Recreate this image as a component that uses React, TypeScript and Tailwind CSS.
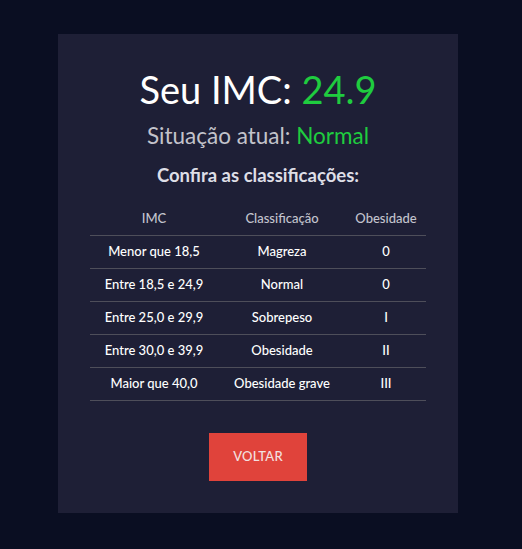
import React from "react";

const rows = [
  ["Menor que 18,5", "Magreza", "0"],
  ["Entre 18,5 e 24,9", "Normal", "0"],
  ["Entre 25,0 e 29,9", "Sobrepeso", "I"],
  ["Entre 30,0 e 39,9", "Obesidade", "II"],
  ["Maior que 40,0", "Obesidade grave", "III"],
];

export default function App() {
  return (
    <div
      className="min-h-screen w-full bg-[#0a0e22] pt-[34px] pb-[36px]"
      style={{ fontFamily: "Lato, 'Open Sans', sans-serif" }}
    >
      <div className="ml-[58px] w-[400px] h-[479px] bg-[#1e1f36] px-8 pt-[32px] flex flex-col items-center">
        <h1 className="text-[38px] leading-[46px] font-normal text-white">
          Seu IMC: <span className="text-[#1fcc3f]">24.9</span>
        </h1>
        <p className="mt-[11px] text-[22.5px] leading-[26px] text-[#c3c3cb]">
          Situação atual: <span className="text-[#1fcc3f]">Normal</span>
        </p>
        <h2 className="mt-[15px] text-[18.5px] leading-[22px] font-bold text-[#dedee6]">
          Confira as classificações:
        </h2>
        <div className="mt-[16px] w-full text-[13px] font-medium">
          <div className="grid grid-cols-[128px_128px_80px] h-[34px] items-center border-b border-[#4e4e5a] text-[#c3c4ce]">
            <div className="text-center">IMC</div>
            <div className="text-center">Classificação</div>
            <div className="text-center">Obesidade</div>
          </div>
          {rows.map((r) => (
            <div
              key={r[0]}
              className="grid grid-cols-[128px_128px_80px] h-[33px] items-center border-b border-[#4e4e5a] text-white"
            >
              <div className="text-center">{r[0]}</div>
              <div className="text-center">{r[1]}</div>
              <div className="text-center">{r[2]}</div>
            </div>
          ))}
        </div>
        <button className="mt-[32px] w-[98px] h-[48px] bg-[#e0433b] text-[#f3e0e0] text-[13px] font-medium tracking-[0.2px]">
          VOLTAR
        </button>
      </div>
    </div>
  );
}
